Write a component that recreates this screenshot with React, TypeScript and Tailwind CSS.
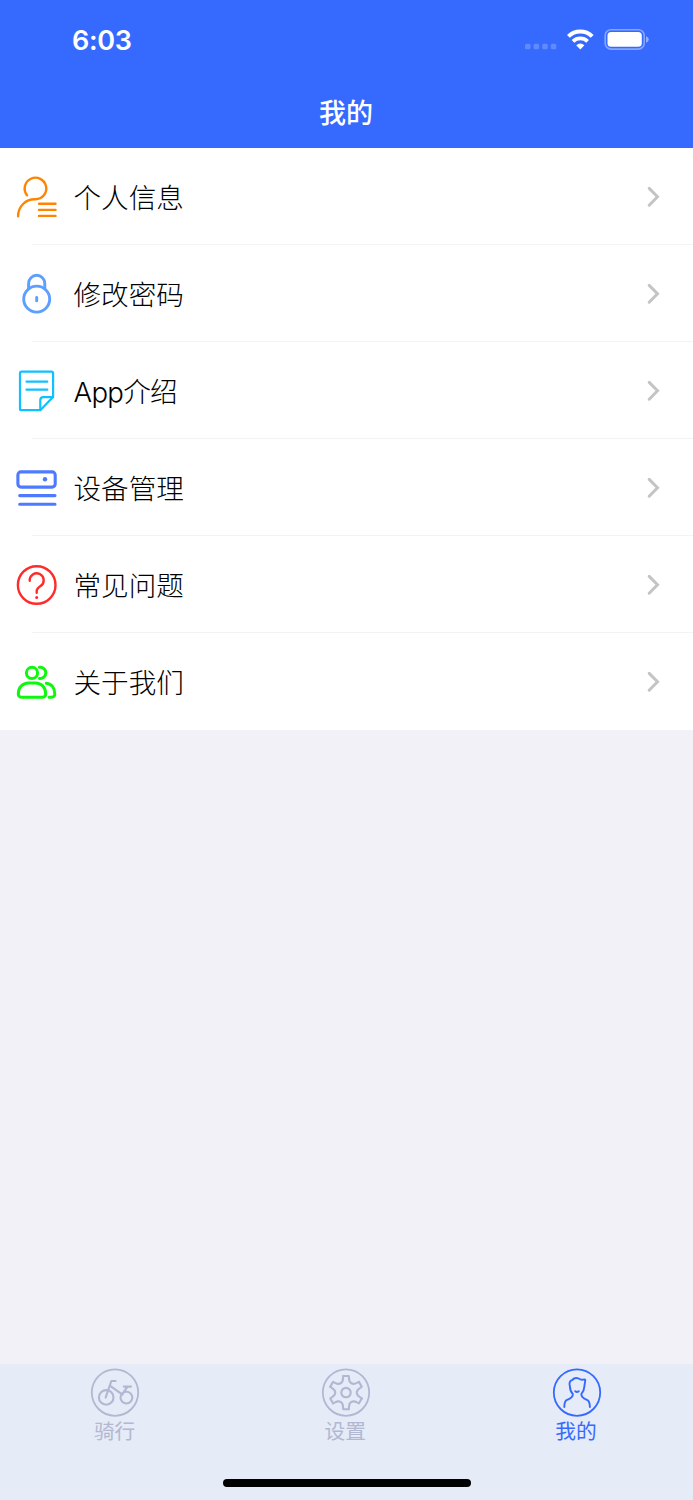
import React from 'react';

const gearAngles = [0, 60, 120, 180, 240, 300];

const menuItems = [
  {
    label: '个人信息',
    icon: (
      <g stroke="#ff8400" strokeWidth="2.4">
        <path d="M12 20.2A10.8 10.8 0 1 1 20.3 24.3C10.5 24.1 3.2 31.4 3.1 41.2" />
        <path d="M24 28.7H40.5M24 34.9H40.5M24 40.9H40.5" />
      </g>
    ),
  },
  {
    label: '修改密码',
    icon: (
      <g stroke="#5c9fff" strokeWidth="2.9">
        <circle cx="21.7" cy="27.1" r="13" />
        <path d="M13.6 16.5V11.4a8.1 8.1 0 0 1 16.2 0V16.5M21.7 25.4V28.9" />
      </g>
    ),
  },
  {
    label: 'App介绍',
    icon: (
      <g stroke="#10c0ff" strokeWidth="2.2">
        <path d="M6.5 2.7H36.6a1.5 1.5 0 0 1 1.5 1.5V28L25.3 41.2H6.5A1.5 1.5 0 0 1 5 39.7V4.2A1.5 1.5 0 0 1 6.5 2.7Z" />
        <path d="M25.3 41V31.2Q25.3 28.2 28.3 28.2H38M11.5 12.6H32.3M11.5 20.7H32.3" />
      </g>
    ),
  },
  {
    label: '设备管理',
    icon: (
      <g stroke="#4d7aff" strokeWidth="3.1">
        <rect x="2.9" y="5.9" width="37.3" height="15.2" rx="3" />
        <circle cx="30" cy="13.3" r="2.2" fill="#4d7aff" stroke="none" />
        <path d="M4.7 29.6H40M4.7 38.3H40" />
      </g>
    ),
  },
  {
    label: '常见问题',
    icon: (
      <g stroke="#ff2b2b" strokeWidth="2.4">
        <circle cx="21.7" cy="22" r="18.8" />
        <path d="M14.7 17.7A7 7 0 1 1 25.6 23.1C23 24.9 21.7 25.8 21.7 28V29.8" />
        <circle cx="21.7" cy="34.6" r="1.5" fill="#ff2b2b" stroke="none" />
      </g>
    ),
  },
  {
    label: '关于我们',
    icon: (
      <g stroke="#0df80d" strokeWidth="3">
        <circle cx="17" cy="12.9" r="5.6" />
        <path d="M6.2 37.2H27.7a3 3 0 0 0 3-3.2C30.7 27.5 26.5 23 20.5 23H13.5C7.5 23 3.3 27.5 3.3 34a3 3 0 0 0 2.9 3.2Z" />
        <path d="M24.5 7.3A5.6 5.6 0 1 1 24.5 18.4M31.3 23.3C36.8 24 39.8 28.3 39.8 34A3 3 0 0 1 36.8 37.2H34.2" />
      </g>
    ),
  },
];

const tabs = [
  {
    label: '骑行',
    active: false,
    icon: (
      <>
        <circle cx="16.2" cy="29.8" r="7.3" />
        <circle cx="36.4" cy="30" r="5.9" />
        <path d="M25.6 13.4H21.3L15.6 30M20.2 18.2L32.5 27M33.8 19H41M37.2 19.5L32 27" />
      </>
    ),
  },
  {
    label: '设置',
    active: false,
    icon: (
      <g transform="translate(25 25)">
        <circle r="4.7" />
        {gearAngles.map(angle => (
          <path key={angle} transform={`rotate(${angle})`} d="M-2.8 -16.6H2.8L3 -14.3C3 -9.5 6.73 -7.35 10.88 -9.74L12.98 -10.73" />
        ))}
      </g>
    ),
  },
  {
    label: '我的',
    active: true,
    icon: (
      <g strokeWidth="1.9">
        <path d="M12.3 39.5C12.3 35.5 12.8 33.2 15 32.2C17.8 31 20.9 30.6 20.9 26.5C18.8 24.5 18 22 17.9 18.8C16.9 15.5 17.8 12.8 20.2 12.4C22.6 9.7 26 10.3 28.6 11.9C30.2 12.6 31.6 11.7 33.2 12C33.4 14 32.6 16 32.4 18.8C32.2 22 31.2 24.5 29.3 26.5C29.3 30.6 32.2 31 35 32.2C37.2 33.2 37.9 35.5 37.9 39.5" />
        <path d="M23.2 23.6Q25 25 26.8 23.6" />
      </g>
    ),
  },
];

const StatusBar = () => (
  <div className="flex h-[78px] items-center pr-[44px] pl-[72px]">
    <span className="flex-1 pt-[2px] font-['Inter'] text-[27px] font-semibold leading-none tracking-[-0.3px]">6:03</span>
    <svg className="h-[30px] w-[125px]" viewBox="524 24 125 30" fill="none">
      <g fill="#fff" fillOpacity="0.22">
        <rect x="525" y="43.8" width="5.5" height="5.5" rx="1.5" />
        <rect x="533.6" y="43.8" width="5.5" height="5.5" rx="1.5" />
        <rect x="542.2" y="43.8" width="5.5" height="5.5" rx="1.5" />
        <rect x="550.8" y="43.8" width="5.5" height="5.5" rx="1.5" />
      </g>
      <path d="M568.4 36.4a17 17 0 0 1 23.8 0" stroke="#fff" strokeWidth="4" />
      <path d="M573 41.3a10.5 10.5 0 0 1 14.6 0" stroke="#fff" strokeWidth="3.8" />
      <path d="M576.2 45.2q4.1-3.5 8.2 0l-4.1 4.2z" fill="#fff" />
      <rect x="605.2" y="29.7" width="39" height="19.4" rx="5.8" stroke="#fff" strokeOpacity="0.4" strokeWidth="1.6" />
      <rect x="607.5" y="32" width="34.3" height="14.8" rx="3.6" fill="#fff" />
      <path d="M646 36.3q2.8 1 2.8 3.2t-2.8 3.2z" fill="#fff" fillOpacity="0.45" />
    </svg>
  </div>
);

export default function App() {
  return (
    <div className="flex h-[1500px] w-[693px] flex-col overflow-hidden bg-[#f2f1f7] font-['Inter','Noto_Sans_CJK_SC',sans-serif]">
      <header className="h-[148px] shrink-0 bg-[#366aff] text-white">
        <StatusBar />
        <h1 className="flex h-[66px] items-center justify-center pr-[1px] font-['Noto_Sans_CJK_SC',sans-serif] text-[27px] font-medium leading-none">我的</h1>
      </header>

      <main className="flex-1">
        <ul className="bg-white">
          {menuItems.map((item, i) => (
            <li key={item.label} className="flex h-[97.05px] flex-col">
              <div className="flex min-h-0 flex-1 items-center pr-[32px] pl-[15px]">
                <svg className="h-[44px] w-[44px] shrink-0" viewBox="0 0 44 44" fill="none" strokeLinecap="round" strokeLinejoin="round">
                  {item.icon}
                </svg>
                <span className={`ml-[14.5px] flex-1 pt-[4px] text-[27.6px] font-light leading-none text-black ${item.label.startsWith('App') ? 'tracking-[-0.7px]' : ''}`}>
                  {item.label}
                </span>
                <svg className="h-[24px] w-[14px]" viewBox="0 0 14 24" fill="none" stroke="#c4c4c6" strokeWidth="3" strokeLinecap="round">
                  <path d="M2.2 3.4L10.5 11.8L2.2 20.2" />
                </svg>
              </div>
              {i < menuItems.length - 1 && <div className="-mt-px ml-[32px] h-px bg-[#f3f3f5]" />}
            </li>
          ))}
        </ul>
      </main>

      <nav className="flex h-[136.5px] shrink-0 flex-col bg-[#e5ebf7]">
        <div className="flex pr-[1px]">
          {tabs.map(tab => (
            <button
              key={tab.label}
              className={`flex flex-1 flex-col items-center pt-[4px] ${tab.active ? 'text-[#366aff]' : 'text-[#b2b8d2]'}`}
            >
              <svg className="h-[50px] w-[50px]" viewBox="0 0.4 50 50" fill="none" stroke="currentColor" strokeWidth="2.1" strokeLinecap="round" strokeLinejoin="round">
                <circle cx="25" cy="25" r="23.2" strokeWidth="1.8" />
                {tab.icon}
              </svg>
              <span className="mt-[2px] pr-[1.5px] font-['Noto_Sans_CJK_SC',sans-serif] text-[20.7px] leading-none">{tab.label}</span>
            </button>
          ))}
        </div>
        <div className="mx-auto mt-auto mb-[13px] h-[8px] w-[248px] rounded-full bg-black" />
      </nav>
    </div>
  );
}
